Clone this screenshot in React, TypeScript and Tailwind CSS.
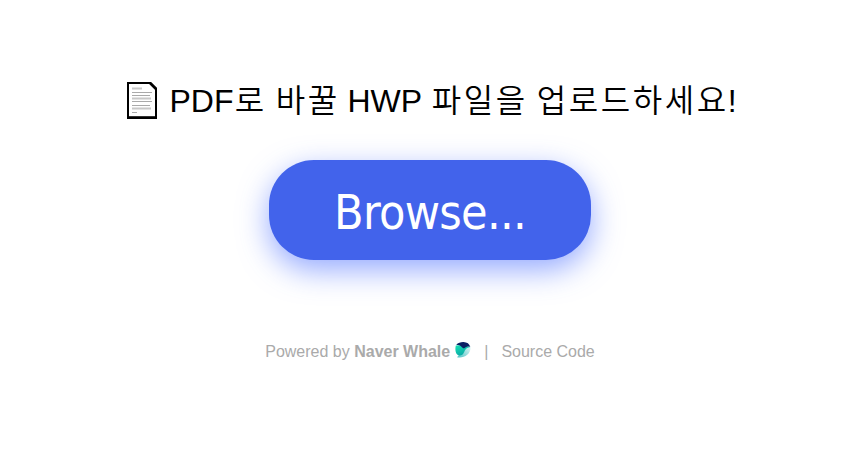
import React from "react";

function Ko({ children }: { children: string }) {
  return (
    <span className="mr-[-1.3px] ml-[1.3px] font-['Noto_Sans_CJK_KR',sans-serif] font-[350] tracking-[2.6px]">{children}</span>
  );
}

function PageIcon() {
  return (
    <svg viewBox="0 0 30 37" className="mr-[12px] h-[37px] w-[30px] shrink-0" aria-hidden="true">
      <path d="M1 1H23.5L29 6.5V35.5H1Z" fill="#fff" stroke="#000" strokeWidth="2" />
      <path d="M0 35.7H30" stroke="#000" strokeWidth="2.6" />
      <path d="M23 1L29 7" stroke="#000" strokeWidth="2.5" />
      <path d="M5 6.500H15M5 16.500H24M5 26.500H24" stroke="#c8c8c8" strokeWidth="2" />
      <path d="M5 10.500H25M5 13.500H23M5 19.500H25M5 23.500H23M5 30.500H10" stroke="#aaa" strokeWidth="1" />
    </svg>
  );
}

function WhaleIcon() {
  return (
    <svg viewBox="0 0 16 16" className="mb-[5px] ml-[5px] h-4 w-4 shrink-0" aria-hidden="true">
      <defs>
        <linearGradient id="body" x1="0" y1="0" x2="0.6" y2="1">
          <stop offset="0" stopColor="#19e3b5" />
          <stop offset="1" stopColor="#08a5a5" />
        </linearGradient>
        <linearGradient id="tail" x1="1" y1="0" x2="0" y2="1">
          <stop offset="0" stopColor="#e4f7f7" />
          <stop offset="1" stopColor="#4fc4c4" />
        </linearGradient>
      </defs>
      <path d="M4 13L2 15.200C9 16.300 15.700 13 15.500 5L11 4Z" fill="url(#tail)" />
      <path d="M.8 3.500C-.4 8.500 1 13.500 5 13.500C8 13.500 9 10.500 10 8.300C11 6.300 13 5.500 15.300 5L8 3Z" fill="url(#body)" />
      <path d="M1.200 2.800C3 .8 6 0 8.500.1C12 .2 14.500 2 15.300 5C13 4 11 4.800 9.300 6.200C7.500 7.200 6.500 2.800 1.200 2.800Z" fill="#0b1f63" />
    </svg>
  );
}

export default function App() {
  return (
    <main className="flex h-[450px] w-[866px] flex-col items-center overflow-hidden bg-white font-['Liberation_Sans',Arial,sans-serif]">
      <h1 className="mt-[76px] mr-[2px] flex h-[48px] items-center text-[32px] leading-[48px] font-normal whitespace-nowrap text-black">
        <PageIcon />
        <span className="-mt-[2px]">
          PDF<Ko>로</Ko> <Ko>바꿀</Ko> HWP <Ko>파일을</Ko> <Ko>업로드하세요</Ko>!
        </span>
      </h1>
      <button className="mt-[36px] mr-[6px] h-[100px] w-[322px] rounded-[45px] bg-[#4263eb] pt-[4px] font-['DejaVu_Sans_Condensed','DejaVu_Sans',sans-serif] text-[48px] leading-[56px] tracking-[-0.7px] text-white shadow-[0_10px_30px_rgba(66,103,255,0.56)]">
        Browse...
      </button>
      <footer className="mt-[80px] mr-[6px] flex h-6 items-center text-base text-[#aaa]">
        <span>Powered by <b>Naver Whale</b></span>
        <WhaleIcon />
        <span className="mx-[13px]">|</span>
        <span>Source Code</span>
      </footer>
    </main>
  );
}
